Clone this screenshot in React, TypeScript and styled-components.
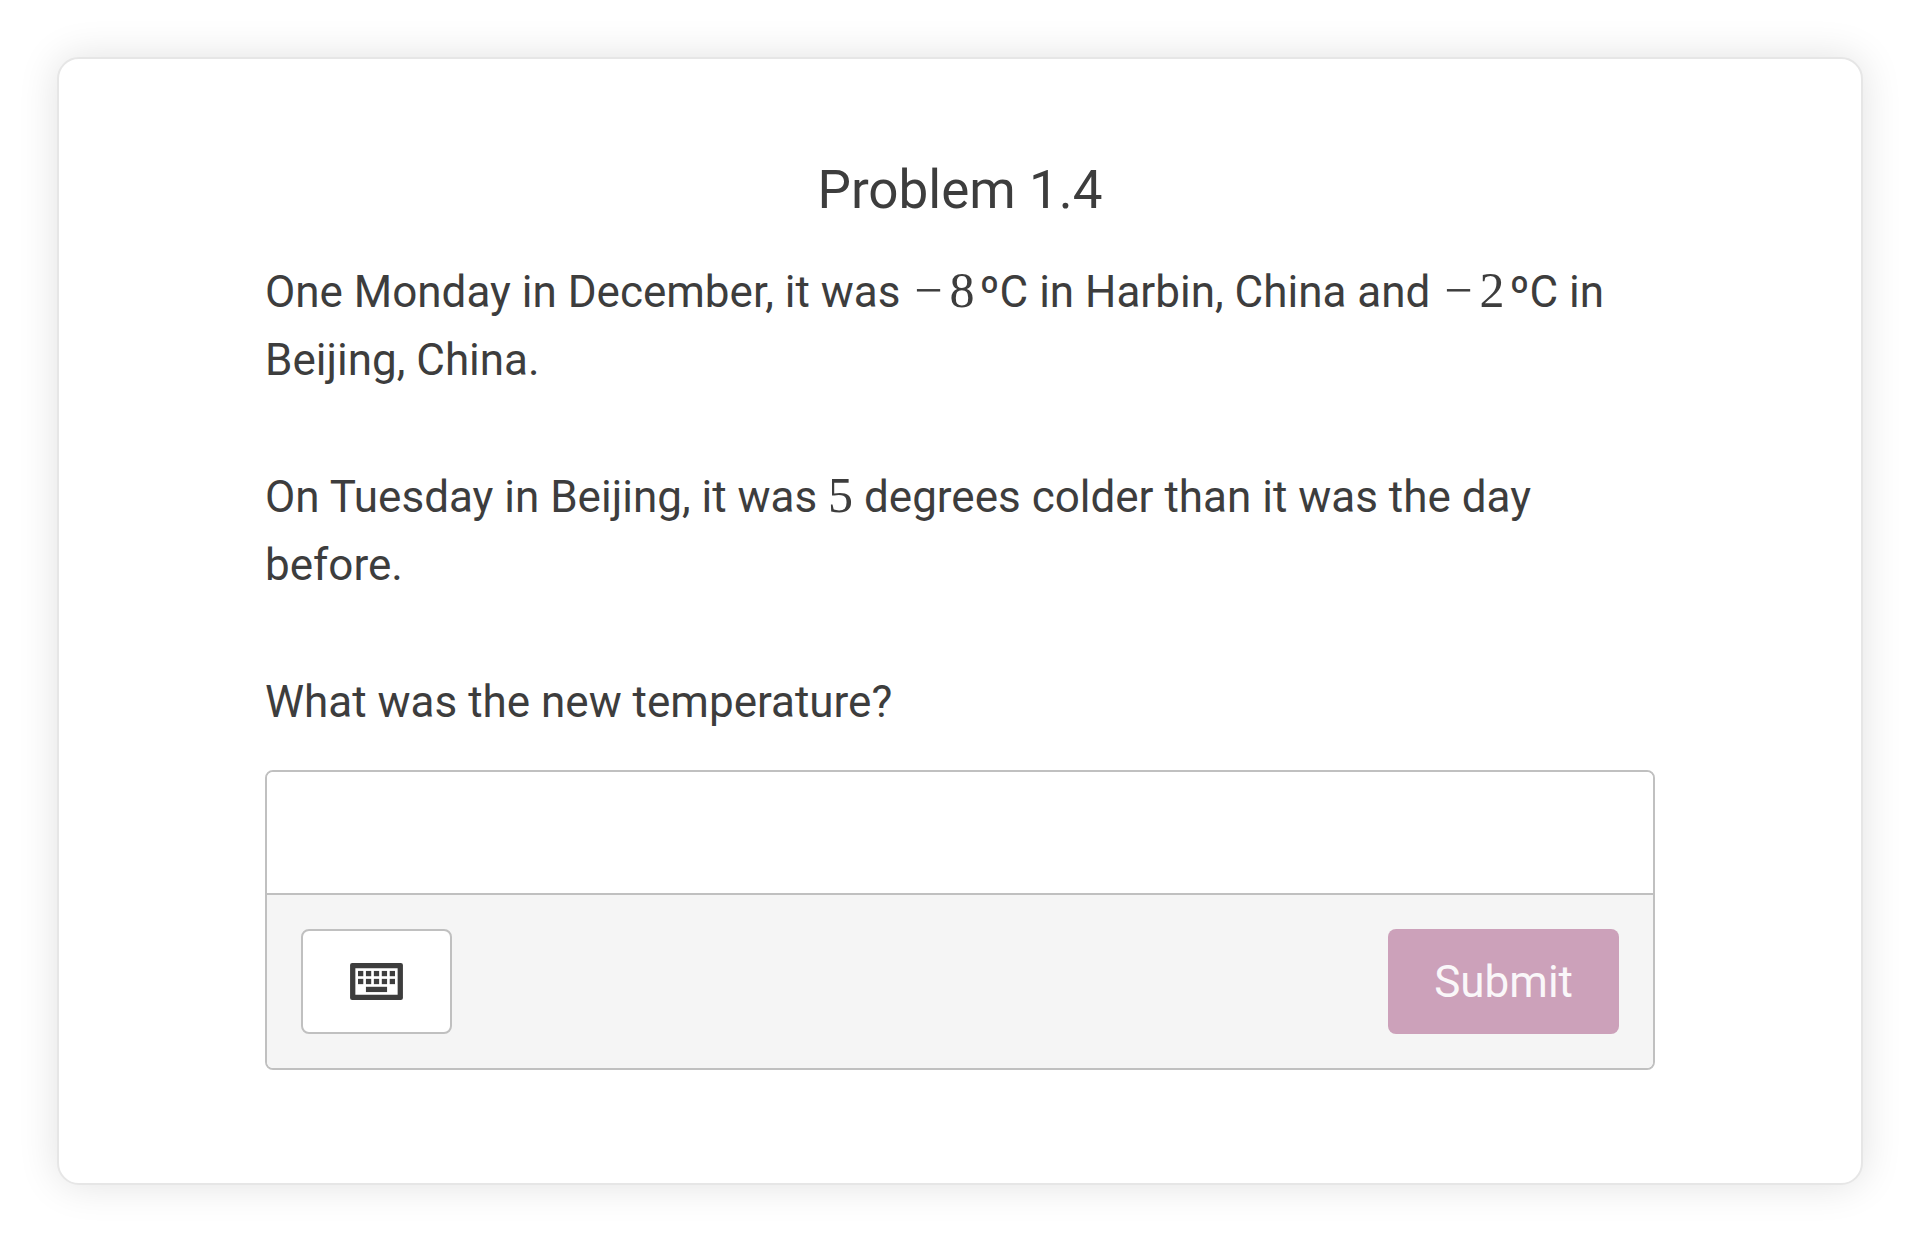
import React from "react";
import styled, { createGlobalStyle } from "styled-components";

const ink = "#3d3d3d";
const line = "#c0c0c0";
const sans = `Roboto, "Liberation Sans", sans-serif`;

const GlobalStyle = createGlobalStyle`
  *, *::before, *::after { box-sizing: border-box; }
  body {
    margin: 0;
    background: #fff;
    color: ${ink};
    font-family: ${sans};
  }
`;

const Page = styled.main`
  padding: 57px;
`;

const Card = styled.section`
  display: flex;
  flex-direction: column;
  gap: 34px;
  padding: 97px 206px 113px;
  border: 2px solid #e6e6e6;
  border-radius: 22px;
  background: #fff;
  box-shadow: 0 0 40px rgba(0, 0, 0, 0.12);
`;

const Title = styled.h1`
  margin: 0;
  font-size: 53px;
  font-weight: 400;
  line-height: 68px;
  text-align: center;
`;

const Prompt = styled.div`
  display: flex;
  flex-direction: column;
  gap: 69px;
  font-size: 44px;
  line-height: 68px;
`;

const Paragraph = styled.p`
  margin: 0;
`;

const Question = styled.label`
  display: block;
`;

const MathText = styled.span<{ $signed?: boolean }>`
  padding: ${({ $signed }) => ($signed ? "0 5px 0 3px" : "0")};
  font-family: "Liberation Serif", serif;
  font-size: 50px;
  line-height: 1;
  white-space: nowrap;
`;

const Operator = styled.span`
  margin-right: 7px;
`;

const AnswerBox = styled.form`
  overflow: hidden;
  border: 2px solid ${line};
  border-radius: 8px;
`;

const AnswerInput = styled.input`
  display: block;
  width: 100%;
  height: 121px;
  padding: 0 34px;
  border: 0;
  outline: 0;
  background: #fff;
  color: ${ink};
  font-family: ${sans};
  font-size: 44px;
`;

const Toolbar = styled.div`
  display: flex;
  align-items: center;
  justify-content: space-between;
  padding: 34px;
  border-top: 2px solid ${line};
  background: #f5f5f5;
`;

const ToolButton = styled.button`
  display: flex;
  align-items: center;
  justify-content: center;
  height: 105px;
  border-radius: 8px;
  font-family: ${sans};
  font-size: 44px;
`;

const KeyboardButton = styled(ToolButton)`
  padding: 0 47px;
  border: 2px solid ${line};
  background: #fff;
  color: ${ink};
`;

const SubmitButton = styled(ToolButton)`
  padding: 0 46px;
  border: 0;
  background: #cca1ba;
  color: #faf7f9;
`;

const keyColumns = [3, 6, 9, 12, 15];
const keyRows = [3, 6];

function KeyboardIcon() {
  return (
    <svg width="53" height="37" viewBox="0 0 20 14" fill="currentColor" aria-hidden="true">
      <path
        fillRule="evenodd"
        d="M.8 0h18.4a.8.8 0 0 1 .8.8v12.4a.8.8 0 0 1-.8.8H.8a.8.8 0 0 1-.8-.8V.8A.8.8 0 0 1 .8 0ZM2 2v10h16V2Z"
      />
      {keyRows.map((y) =>
        keyColumns.map((x) => <rect key={`${x}-${y}`} x={x} y={y} width="2" height="2" />)
      )}
      <rect x="6" y="9" width="8" height="2" />
    </svg>
  );
}

function Negative({ value }: { value: number }) {
  return (
    <MathText $signed>
      <Operator>−</Operator>
      {value}
    </MathText>
  );
}

export default function App() {
  return (
    <>
      <GlobalStyle />
      <Page>
        <Card>
          <Title>Problem 1.4</Title>
          <Prompt>
            <Paragraph>
              One Monday in December, it was <Negative value={8} />
              ºC in Harbin, China and <Negative value={2} />
              ºC in Beijing, China.
            </Paragraph>
            <Paragraph>
              On Tuesday in Beijing, it was <MathText>5</MathText> degrees colder than it was the
              day before.
            </Paragraph>
            <Question htmlFor="answer">What was the new temperature?</Question>
          </Prompt>
          <AnswerBox onSubmit={(event) => event.preventDefault()}>
            <AnswerInput id="answer" type="text" autoComplete="off" />
            <Toolbar>
              <KeyboardButton type="button" aria-label="Open keyboard">
                <KeyboardIcon />
              </KeyboardButton>
              <SubmitButton type="submit" disabled>
                Submit
              </SubmitButton>
            </Toolbar>
          </AnswerBox>
        </Card>
      </Page>
    </>
  );
}
